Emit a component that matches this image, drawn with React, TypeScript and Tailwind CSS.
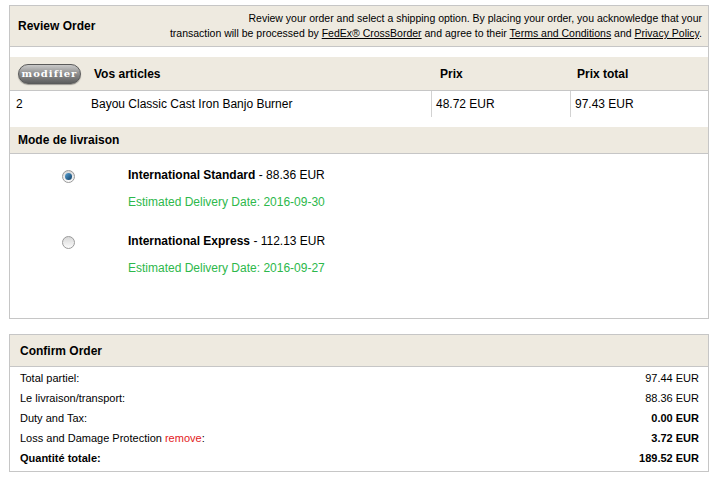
import React from "react";

const BEIGE = "bg-[#eeeae0]";

type ShippingOption = {
  name: string;
  price: string;
  eta: string;
  selected: boolean;
};

const SHIPPING_OPTIONS: ShippingOption[] = [
  {
    name: "International Standard",
    price: "88.36 EUR",
    eta: "2016-09-30",
    selected: true,
  },
  {
    name: "International Express",
    price: "112.13 EUR",
    eta: "2016-09-27",
    selected: false,
  },
];

type SummaryLine = {
  label: React.ReactNode;
  value: string;
  boldValue?: boolean;
  boldLabel?: boolean;
};

const SUMMARY: SummaryLine[] = [
  { label: "Total partiel:", value: "97.44 EUR" },
  { label: "Le livraison/transport:", value: "88.36 EUR" },
  { label: "Duty and Tax:", value: "0.00 EUR", boldValue: true },
  {
    label: (
      <>
        Loss and Damage Protection{" "}
        <span className="text-[#e3201b]">remove</span>:
      </>
    ),
    value: "3.72 EUR",
    boldValue: true,
  },
  {
    label: "Quantité totale:",
    value: "189.52 EUR",
    boldValue: true,
    boldLabel: true,
  },
];

function Radio({ checked }: { checked: boolean }) {
  return (
    <span className="flex h-[13px] w-[13px] items-center justify-center rounded-full border border-[#9a9a9a] bg-gradient-to-b from-[#d8d8d8] to-[#fbfbfb]">
      {checked && (
        <span className="h-[7px] w-[7px] rounded-full bg-gradient-to-br from-[#5aa3d6] to-[#0e3f66]" />
      )}
    </span>
  );
}

function ModifierButton() {
  return (
    <button className="flex h-[20px] w-[63px] items-center justify-center rounded-full border border-[#5a5a5a] bg-gradient-to-b from-[#c9c9c9] via-[#8d8d8d] to-[#5e5e5e] font-['DejaVu_Serif',serif] text-[10px] font-bold tracking-[1px] text-white shadow-[0_1px_1px_rgba(0,0,0,0.35)]">
      modifier
    </button>
  );
}

export default function App() {
  return (
    <div className="min-h-[483px] bg-white pt-[5px] pl-[9px] pr-[8px] font-['Liberation_Sans',Arial,sans-serif] text-[12px] text-black">
      {/* review panel */}
      <div className="border border-[#c6c6c6]">
        <div
          className={`flex h-[41px] items-center justify-between border-b border-[#c6c6c6] ${BEIGE} pl-[8px] pr-[6px]`}
        >
          <h2 className="text-[12px] font-bold">Review Order</h2>
          <p className="text-right text-[10.5px] leading-[15px]">
            Review your order and select a shipping option. By placing your
            order, you acknowledge that your
            <br />
            transaction will be processed by{" "}
            <a className="underline">FedEx® CrossBorder</a> and agree to their{" "}
            <a className="underline">Terms and Conditions</a> and{" "}
            <a className="underline">Privacy Policy</a>.
          </p>
        </div>

        <div className="h-[10px]" />

        <div
          className={`flex h-[34px] items-center border-b border-[#c6c6c6] ${BEIGE} font-bold`}
        >
          <div className="flex w-[76px] justify-start pl-[8px]">
            <ModifierButton />
          </div>
          <div className="w-[345px] pl-[8px]">Vos articles</div>
          <div className="w-[138px] pl-[9px]">Prix</div>
          <div className="flex-1 pl-[8px]">Prix total</div>
        </div>

        <div className="flex h-[36px] items-start">
          <div className="flex h-[26px] w-[76px] items-center pl-[6px]">2</div>
          <div className="flex h-[26px] w-[345px] items-center pl-[5px]">
            Bayou Classic Cast Iron Banjo Burner
          </div>
          <div className="flex h-[26px] w-[139px] items-center border-l border-[#d2d2d2] pl-[4px]">
            48.72 EUR
          </div>
          <div className="flex h-[26px] flex-1 items-center border-l border-[#d2d2d2] pl-[4px]">
            97.43 EUR
          </div>
        </div>

        <div
          className={`flex h-[27px] items-center border-b border-[#c6c6c6] ${BEIGE} pl-[8px] font-bold`}
        >
          Mode de livraison
        </div>

        <div className="flex h-[164px] flex-col gap-[24px] pt-[14px]">
          {SHIPPING_OPTIONS.map((opt) => (
            <div key={opt.name} className="flex items-start">
              <div className="flex w-[118px] justify-end pr-[53px] pt-[2px]">
                <Radio checked={opt.selected} />
              </div>
              <div className="flex flex-col gap-[12px] leading-[15px]">
                <div>
                  <span className="font-bold">{opt.name}</span> - {opt.price}
                </div>
                <div className="text-[#2db84b]">
                  Estimated Delivery Date: {opt.eta}
                </div>
              </div>
            </div>
          ))}
        </div>
      </div>

      <div className="h-[15px]" />

      {/* confirm panel */}
      <div className="border border-[#c6c6c6]">
        <div
          className={`flex h-[32px] items-center border-b border-[#c6c6c6] ${BEIGE} pl-[10px] font-bold`}
        >
          Confirm Order
        </div>
        <div className="flex flex-col pt-[1px] pb-[3px] pl-[10px] pr-[9px] text-[11px]">
          {SUMMARY.map((line, i) => (
            <div key={i} className="flex h-[20px] items-center justify-between">
              <span className={line.boldLabel ? "font-bold" : ""}>
                {line.label}
              </span>
              <span className={line.boldValue ? "font-bold" : ""}>
                {line.value}
              </span>
            </div>
          ))}
        </div>
      </div>
    </div>
  );
}
